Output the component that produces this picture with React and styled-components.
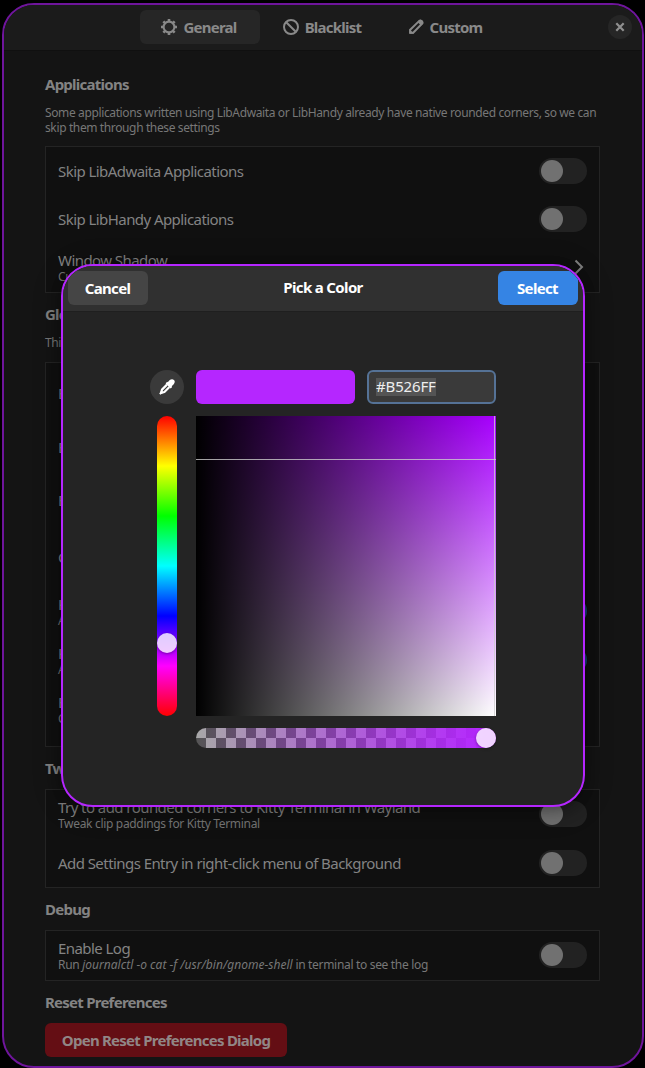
import React from "react";
import styled, { createGlobalStyle, css } from "styled-components";

const Global = createGlobalStyle`
  * { box-sizing: border-box; }
  html, body { margin: 0; background: #000; }
  body { font-family: "Noto Sans", sans-serif; font-size: 15px; color: #838383; }
  button { font: inherit; border: 0; padding: 0; }
`;

const bold = css`
  font-size: 15px;
  font-weight: 700;
  letter-spacing: -0.75px;
  white-space: nowrap;
`;

const Desktop = styled.div`
  position: relative;
  width: 645px;
  height: 1068px;
  padding: 3px 1px 0 2px;
  overflow: hidden;
  background: #000;
`;
const Window = styled.main`
  height: 1065px;
  border: 2px solid #6f159c;
  border-radius: 32px;
  background: #141414;
  overflow: hidden;
`;
const HeaderBar = styled.header`
  position: relative;
  height: 46px;
  padding: 5px 0 0 136px;
  display: flex;
  gap: 3px;
  background: #1b1b1b;
  border-bottom: 1px solid #101010;
`;
const Tab = styled.button`
  ${bold}
  width: 120px;
  height: 34px;
  padding-right: 2px;
  border-radius: 6px;
  display: flex;
  align-items: center;
  justify-content: center;
  gap: 6px;
  color: #898989;
  background: ${(p) => (p.$active ? "#262626" : "transparent")};
`;
const TabText = styled.span`
  line-height: 18px;
  padding-bottom: 1px;
`;
const CloseButton = styled.button`
  position: absolute;
  right: 10px;
  top: 10px;
  width: 24px;
  height: 24px;
  border-radius: 50%;
  background: #262626;
  color: #909090;
  display: grid;
  place-items: center;
`;
const Page = styled.div`
  padding: 23px 42px 0 41px;
  display: flex;
  flex-direction: column;
`;
const GroupTitle = styled.h2`
  ${bold}
  margin: 0;
  height: 20px;
  line-height: 20px;
`;
const GroupText = styled.p`
  margin: ${(p) => p.$top}px 0 0;
  font-size: 12px;
  line-height: 15px;
  letter-spacing: -0.375px;
  color: #777;
  white-space: pre;
`;
const List = styled.section`
  margin: ${(p) => p.$top}px 0 ${(p) => p.$bottom}px;
  padding: ${(p) => p.$pad || "0"};
  border: 1px solid #242424;
  background: #101010;
`;
const RowBox = styled.div`
  height: ${(p) => p.$h}px;
  padding: 0 12px ${(p) => (p.$h === 49 ? 1 : 0)}px;
  display: flex;
  align-items: center;
  justify-content: space-between;
`;
const Labels = styled.div`
  display: flex;
  flex-direction: column;
  padding-top: ${(p) => (p.$double ? 1 : 0)}px;
  white-space: nowrap;
`;
const Label = styled.span`
  line-height: 18px;
  letter-spacing: -0.56px;
`;
const SubLabel = styled.span`
  font-size: 12px;
  line-height: 15px;
  letter-spacing: -0.32px;
  color: #777;
`;
const Command = styled.i`
  letter-spacing: 0.02px;
`;
const Switch = styled.span`
  width: 48px;
  height: 26px;
  padding: 2px;
  display: flex;
  justify-content: ${(p) => (p.$on ? "flex-end" : "flex-start")};
  border-radius: 13px;
  background: ${(p) => (p.$on ? "#1a4272" : "#222")};
  &::before {
    content: "";
    width: 22px;
    height: 22px;
    border-radius: 50%;
    background: #717171;
  }
`;
const DangerButton = styled.button`
  ${bold}
  width: 242px;
  height: 34px;
  margin-top: 11px;
  border-radius: 6px;
  background: #640e14;
  color: #918686;
`;

const Dialog = styled.section`
  position: absolute;
  left: 61px;
  top: 264px;
  width: 524px;
  height: 543px;
  border: 2px solid #b526ff;
  border-radius: 32px;
  background: #242424;
  color: #fff;
  overflow: hidden;
  box-shadow: 0 2px 8px 2px rgba(0, 0, 0, 0.18), 0 3px 20px 10px rgba(0, 0, 0, 0.16);
`;
const DialogHeader = styled.header`
  height: 46px;
  padding: 5px 5px 0;
  display: flex;
  justify-content: space-between;
  background: #303030;
  border-bottom: 1px solid #1f1f1f;
`;
const DialogTitle = styled.h1`
  ${bold}
  margin: 0;
  line-height: 33px;
  letter-spacing: -0.65px;
`;
const DialogButton = styled.button`
  ${bold}
  width: 80px;
  height: 34px;
  padding: 0 1px 1px 0;
  border-radius: 6px;
  color: #fff;
  letter-spacing: -0.65px;
  background: ${(p) => (p.$suggested ? "#3584e4" : "#454545")};
`;
const Editor = styled.div`
  padding: 58px 0 0 87px;
  display: grid;
  grid-template-columns: 34px 300px;
  grid-template-rows: 34px 300px 20px;
  gap: 12px;
`;
const Picker = styled.button`
  border-radius: 50%;
  background: #3a3a3a;
  display: grid;
  place-items: center;
`;
const ColorLine = styled.div`
  display: flex;
  gap: 12px;
`;
const Swatch = styled.div`
  width: 159px;
  border-radius: 6px;
  background: #b526ff;
`;
const Entry = styled.div`
  width: 129px;
  padding-left: 7px;
  display: flex;
  align-items: center;
  border: 2px solid #557296;
  border-radius: 6px;
  background: #3a3a3a;
`;
const Selection = styled.span`
  height: 18px;
  line-height: 17px;
  background: #545454;
  color: #eee;
  letter-spacing: -0.15px;
`;
const knob = css`
  content: "";
  width: 20px;
  height: 20px;
  border-radius: 50%;
  background: rgba(255, 255, 255, 0.8);
  box-shadow: 0 1px 3px rgba(0, 0, 0, 0.35);
`;
const HueBar = styled.div`
  justify-self: center;
  width: 20px;
  padding-top: 217px;
  border-radius: 10px;
  background: linear-gradient(#f00, #ff0, #0f0, #0ff, #00f, #f0f, #f00);
  &::before { ${knob} display: block; }
`;
const Plane = styled.div`
  display: grid;
  grid-template-columns: 298px 1px 1fr;
  grid-template-rows: 43px 1px 1fr;
  background: linear-gradient(to right, #000, transparent), linear-gradient(to top, #fff, transparent), #a800ff;
  &::before { content: ""; grid-area: 2 / 1 / 3 / 4; background: rgba(204, 204, 204, 0.8); }
  &::after { content: ""; grid-area: 1 / 2 / 4 / 3; background: rgba(204, 204, 204, 0.8); }
`;
const AlphaBar = styled.div`
  grid-column: 2;
  display: flex;
  justify-content: flex-end;
  border-radius: 10px;
  background: linear-gradient(to right, transparent, #b526ff 290px),
    repeating-conic-gradient(#555 0 25%, #a8a8a8 0 50%) 0 0 / 20px 20px;
  &::after { ${knob} }
`;

const GearIcon = () => (
  <svg width="16" height="16" viewBox="0 0 16 16" fill="none" stroke="currentColor">
    <circle cx="8" cy="8" r="5.4" strokeWidth="2.1" />
    {[0, 45, 90, 135, 180, 225, 270, 315].map((a) => (
      <path key={a} d="M8 0V2.6" strokeWidth="2.6" transform={`rotate(${a} 8 8)`} />
    ))}
  </svg>
);
const BlockIcon = () => (
  <svg width="16" height="16" viewBox="0 0 16 16" fill="none" stroke="currentColor" strokeWidth="2">
    <circle cx="8" cy="8" r="7" />
    <path d="M3.2 3.2L12.8 12.8" />
  </svg>
);
const PencilIcon = () => (
  <svg width="16" height="16" viewBox="0 0 16 16" fill="none" stroke="currentColor" strokeWidth="2" strokeLinejoin="round">
    <path d="M2.2 13.8V10.8L11 2.1Q12.4 1 13.7 2.3T14 4.8L5.2 13.8Z" />
    <path d="M9.5 3L13 6.5L15.2 4.3Q15.6 1 12.2 .8Z" fill="currentColor" stroke="none" />
    <path d="M1.2 10L6 14.8H1.2Z" fill="currentColor" stroke="none" />
  </svg>
);
const CloseIcon = () => (
  <svg width="10" height="10" viewBox="0 0 10 10" fill="none" stroke="currentColor" strokeWidth="2.2">
    <path d="M1.3 1.3L8.7 8.7M8.7 1.3L1.3 8.7" />
  </svg>
);
const ChevronIcon = () => (
  <svg width="16" height="16" viewBox="0 0 16 16" fill="none" stroke="currentColor" strokeWidth="2">
    <path d="M4.5 1.5L11 8L4.5 14.5" />
  </svg>
);
const DropperIcon = () => (
  <svg width="16" height="16" viewBox="0 0 16 16">
    <path d="M10.2 1.6Q13-.6 14.9 1.1T14.5 5.6L12.7 7.2L13.2 7.9L11.6 9.4L6.6 4.4L8.1 2.8L8.8 3.3Z" fill="#fff" />
    <path d="M8 5.6L3 10.6L2 14L5.4 13L10.4 8" fill="none" stroke="#fff" strokeWidth="2.2" strokeLinejoin="round" />
    <path d="M2.4 11.6L.2 14.6L1.4 15.8L4.4 13.6Z" fill="#fff" />
  </svg>
);

const Row = ({ h = 49, title, sub, control }) => (
  <RowBox $h={h}>
    <Labels $double={Boolean(sub)}>
      <Label>{title}</Label>
      {sub && <SubLabel>{sub}</SubLabel>}
    </Labels>
    {control === "off" && <Switch />}
    {control === "on" && <Switch $on />}
    {control === "next" && <ChevronIcon />}
  </RowBox>
);

export default function App() {
  return (
    <>
      <Global />
      <Desktop>
        <Window>
          <HeaderBar>
            <Tab $active><GearIcon /><TabText>General</TabText></Tab>
            <Tab><BlockIcon /><TabText>Blacklist</TabText></Tab>
            <Tab><PencilIcon /><TabText>Custom</TabText></Tab>
            <CloseButton aria-label="Close"><CloseIcon /></CloseButton>
          </HeaderBar>
          <Page>
            <GroupTitle>Applications</GroupTitle>
            <GroupText $top={11}>{"Some applications written using LibAdwaita or LibHandy already have native rounded corners, so we can\nskip them through these settings"}</GroupText>
            <List $top={11} $bottom={11}>
              <Row h={48} title="Skip LibAdwaita Applications" control="off" />
              <Row h={48} title="Skip LibHandy Applications" control="off" />
              <Row title="Window Shadow" sub="Customize the shadow" control="next" />
            </List>
            <GroupTitle>Global</GroupTitle>
            <GroupText $top={11}>This</GroupText>
            <List $top={12} $bottom={11} $pad="3px 0 12px">
              <Row h={54} title="Border" />
              <Row h={53} title="Border" />
              <Row h={54} title="Border" />
              <Row h={60} title="Color" />
              <Row title="Keep" sub="Always" control="on" />
              <Row title="Keep" sub="Always" control="on" />
              <Row title="Edit" sub="Change" />
            </List>
            <GroupTitle>Tweaks</GroupTitle>
            <List $top={11} $bottom={11}>
              <Row title="Try to add rounded corners to Kitty Terminal in Wayland" sub="Tweak clip paddings for Kitty Terminal" control="off" />
              <Row h={48} title="Add Settings Entry in right-click menu of Background" control="off" />
            </List>
            <GroupTitle>Debug</GroupTitle>
            <List $top={11} $bottom={11}>
              <Row title="Enable Log" sub={<>Run <Command>journalctl -o cat -f /usr/bin/gnome-shell</Command> in terminal to see the log</>} control="off" />
            </List>
            <GroupTitle>Reset Preferences</GroupTitle>
            <DangerButton>Open Reset Preferences Dialog</DangerButton>
          </Page>
        </Window>
        <Dialog>
          <DialogHeader>
            <DialogButton>Cancel</DialogButton>
            <DialogTitle>Pick a Color</DialogTitle>
            <DialogButton $suggested>Select</DialogButton>
          </DialogHeader>
          <Editor>
            <Picker aria-label="Pick from screen"><DropperIcon /></Picker>
            <ColorLine>
              <Swatch />
              <Entry><Selection>#B526FF</Selection></Entry>
            </ColorLine>
            <HueBar />
            <Plane />
            <AlphaBar />
          </Editor>
        </Dialog>
      </Desktop>
    </>
  );
}
